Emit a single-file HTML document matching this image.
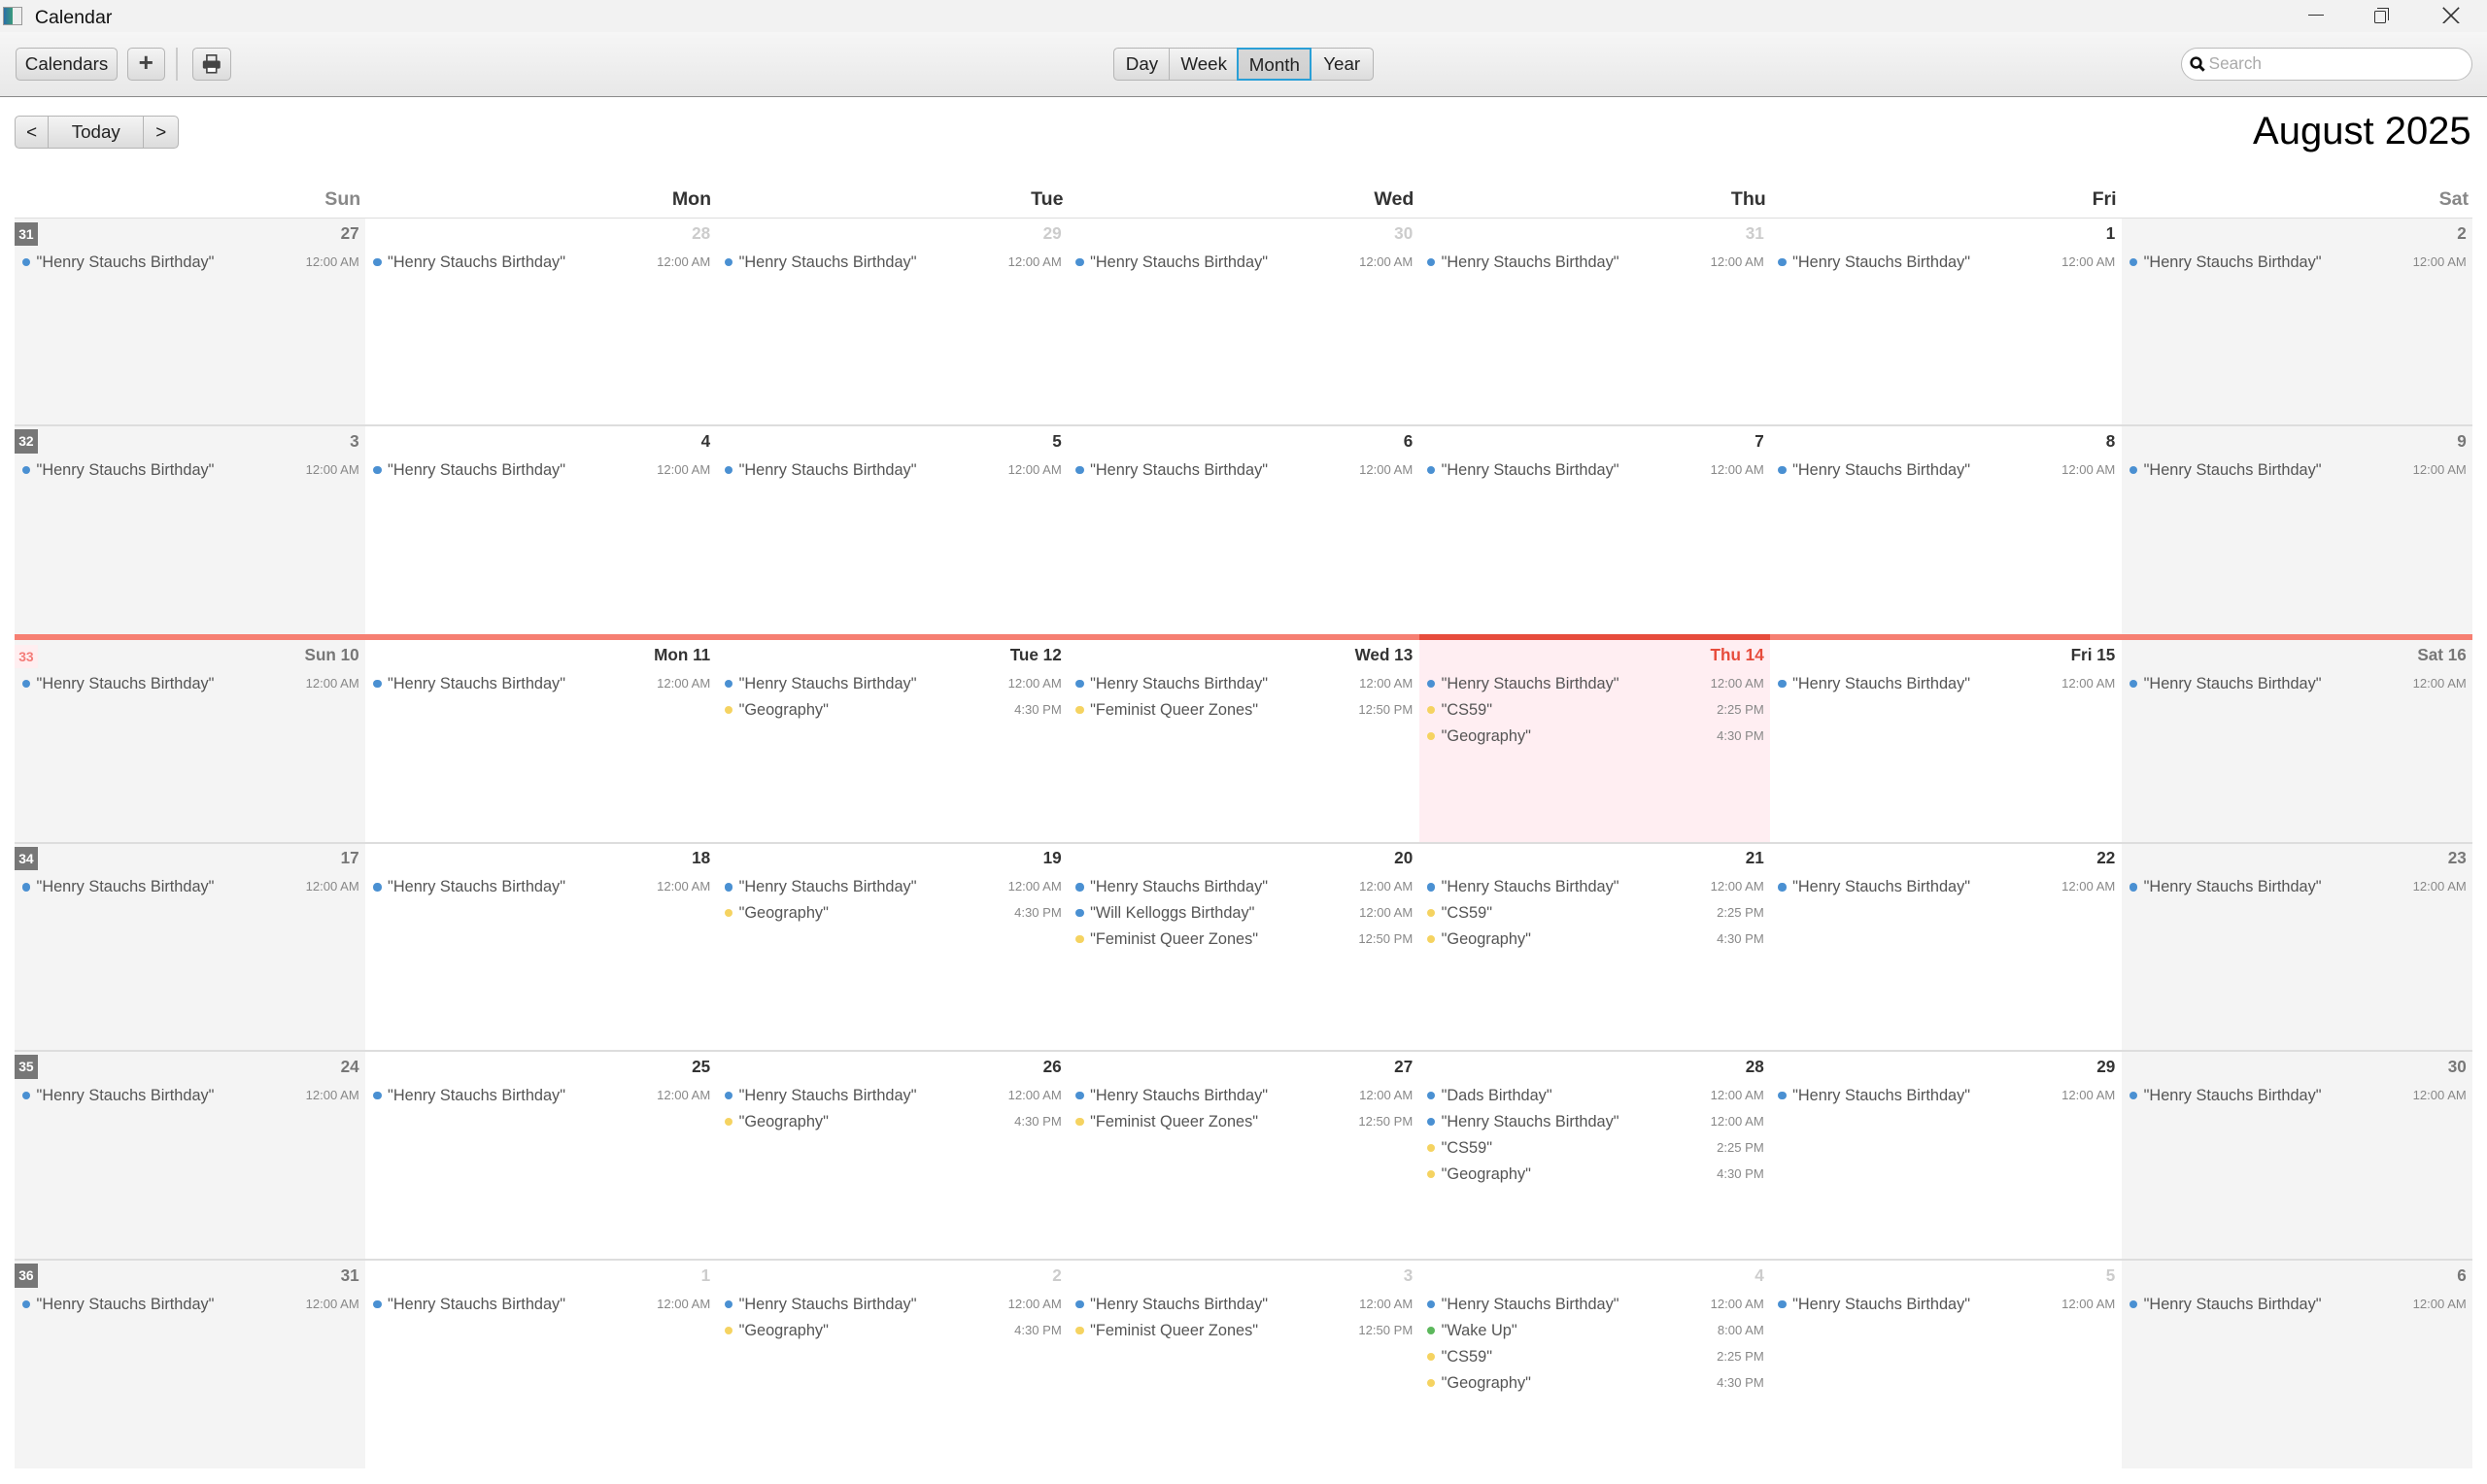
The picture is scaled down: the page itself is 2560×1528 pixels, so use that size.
<!DOCTYPE html>
<html><head><meta charset="utf-8"><style>
*{box-sizing:border-box;margin:0;padding:0}
html,body{width:2560px;height:1528px;overflow:hidden;background:#fff}
#w{zoom:1.632653;width:1568px;height:936px;position:relative;font-family:"Liberation Sans",Arial,sans-serif;background:#fff}
.tb{position:absolute;left:0;top:0;width:1568px;height:20px;background:#f2f2f2}
.tb .t{position:absolute;left:22px;top:4px;font-size:12px;color:#111}
.tb .ic{position:absolute;left:2px;top:4px;width:12px;height:12px;border:1px solid #999;background:linear-gradient(90deg,#2a6fa8 0,#3a9a7a 50%,#eee 50%)}
.tl{position:absolute;left:0;top:20px;width:1568px;height:41px;background:linear-gradient(#f6f6f6,#e8e8e8);border-bottom:1px solid #8a8a8a}
.btn{position:absolute;top:10px;height:21px;border:1px solid #b5b5b5;border-radius:3px;background:linear-gradient(#f4f4f4,#dcdcdc);font-size:11.5px;color:#222;text-align:center;line-height:20px}
.seg{position:absolute;top:10px;height:21px;border:1px solid #b5b5b5;background:linear-gradient(#f4f4f4,#dcdcdc);font-size:11.5px;color:#222;text-align:center;line-height:20px}
.srch{position:absolute;left:1375px;top:10px;width:184px;height:21px;border:1px solid #bbb;border-radius:11px;background:#fff;font-size:10.5px;color:#aaa;line-height:19px;padding-left:17px}
.title{position:absolute;right:10px;top:69px;font-size:24.5px;color:#000}
.hd{position:absolute;top:119px;font-size:12px;font-weight:bold;text-align:right;width:221.4px}
.hline{position:absolute;left:9px;top:137px;width:1550px;height:1.5px;background:#ddd}
.grid{position:absolute;left:9px;top:138px;width:1550px}
.r{display:flex;position:relative;border-bottom:1.5px solid #ddd}
.c{flex:1;position:relative;height:100%;background:#fff}
.we{background:#f4f4f4}
.d{position:absolute;right:4px;top:3px;font-size:10.5px;font-weight:bold;color:#333}
.we .d{color:#777}
.g .d,.we.g .d{color:#ccc}
.wk{position:absolute;left:0;top:2px;width:15px;height:15px;background:#777;color:#fff;font-size:8.5px;font-weight:bold;text-align:center;line-height:15px}
.ev{position:absolute;left:0;right:0;top:19.5px}
.e{height:16.5px;line-height:16px;padding-left:14px;position:relative;font-size:10px;color:#555;white-space:nowrap}
.e i{position:absolute;left:5px;top:5.5px;width:5px;height:5px;border-radius:50%;background:#4a90d2}
.e i.y{background:#f5d361}.e i.gr{background:#5cb85c}
.e s{position:absolute;right:4px;top:0;font-size:8px;color:#888;text-decoration:none}
.r3 .c{border-top:4px solid #f67f72}
.today{background:#ffeef2!important;border-top-color:#e74c3c!important}
</style></head><body><div id="w">
<div class="tb"><div class="ic"></div><div class="t">Calendar</div>
<div style="position:absolute;left:1455px;top:9px;width:10px;height:1px;background:#333"></div>
<div style="position:absolute;left:1497px;top:7px;width:7px;height:8px;border:1px solid #333;border-radius:1px"></div>
<div style="position:absolute;left:1499px;top:5px;width:7px;height:8px;border-top:1px solid #333;border-right:1px solid #333"></div>
<svg style="position:absolute;left:1540px;top:4px" width="11" height="11"><path d="M0.5 0.5L10.5 10.5M10.5 0.5L0.5 10.5" stroke="#333" stroke-width="1"/></svg></div>
<div class="tl">
<div class="btn" style="left:10px;width:64px">Calendars</div>
<div class="btn" style="left:80px;width:24px;font-weight:bold;font-size:16px;line-height:18px;color:#444">+</div>
<div style="position:absolute;left:111px;top:10px;width:1px;height:21px;background:#ccc"></div>
<div class="btn" style="left:121px;width:25px"><svg width="12" height="12" viewBox="0 0 12 12" style="margin-top:4px"><rect x="3" y="0.5" width="6" height="4" fill="none" stroke="#444"/><rect x="0.5" y="4" width="11" height="5" rx="1" fill="#444"/><rect x="3" y="8" width="6" height="3.5" fill="#fff" stroke="#444"/></svg></div>
<div class="seg" style="left:702px;width:36px;border-radius:3px 0 0 3px">Day</div>
<div class="seg" style="left:737px;width:44px">Week</div>
<div class="seg" style="left:780px;width:47px;border:1.5px solid #2a9fd6;background:linear-gradient(#d8d8d8,#cfcfcf);z-index:2">Month</div>
<div class="seg" style="left:826px;width:40px;border-radius:0 3px 3px 0">Year</div>
<div class="srch"><svg width="10" height="10" viewBox="0 0 10 10" style="position:absolute;left:5px;top:5px"><circle cx="4" cy="4" r="3" fill="none" stroke="#111" stroke-width="1.6"/><line x1="6" y1="6" x2="9" y2="9" stroke="#111" stroke-width="1.8"/></svg>Search</div>
</div>
<div class="btn" style="left:9px;top:73px;width:22px;border-radius:3px 0 0 3px">&lt;</div>
<div class="btn" style="left:30px;top:73px;width:61px;border-radius:0">Today</div>
<div class="btn" style="left:90px;top:73px;width:23px;border-radius:0 3px 3px 0">&gt;</div>
<div class="title">August 2025</div>
<div class="hd" style="left:6px;color:#888">Sun</div>
<div class="hd" style="left:227px;color:#333">Mon</div>
<div class="hd" style="left:449px;color:#333">Tue</div>
<div class="hd" style="left:670px;color:#333">Wed</div>
<div class="hd" style="left:892px;color:#333">Thu</div>
<div class="hd" style="left:1113px;color:#333">Fri</div>
<div class="hd" style="left:1335px;color:#888">Sat</div>
<div class="hline"></div>
<div class="grid">
<div class="r" style="height:131px">
<div class="c we"><span class="wk">31</span><div class="d">27</div><div class="ev"><div class="e"><i></i>"Henry Stauchs Birthday"<s>12:00 AM</s></div></div></div>
<div class="c g"><div class="d">28</div><div class="ev"><div class="e"><i></i>"Henry Stauchs Birthday"<s>12:00 AM</s></div></div></div>
<div class="c g"><div class="d">29</div><div class="ev"><div class="e"><i></i>"Henry Stauchs Birthday"<s>12:00 AM</s></div></div></div>
<div class="c g"><div class="d">30</div><div class="ev"><div class="e"><i></i>"Henry Stauchs Birthday"<s>12:00 AM</s></div></div></div>
<div class="c g"><div class="d">31</div><div class="ev"><div class="e"><i></i>"Henry Stauchs Birthday"<s>12:00 AM</s></div></div></div>
<div class="c"><div class="d">1</div><div class="ev"><div class="e"><i></i>"Henry Stauchs Birthday"<s>12:00 AM</s></div></div></div>
<div class="c we"><div class="d">2</div><div class="ev"><div class="e"><i></i>"Henry Stauchs Birthday"<s>12:00 AM</s></div></div></div>
</div>
<div class="r" style="height:131px;border-bottom:none">
<div class="c we"><span class="wk">32</span><div class="d">3</div><div class="ev"><div class="e"><i></i>"Henry Stauchs Birthday"<s>12:00 AM</s></div></div></div>
<div class="c"><div class="d">4</div><div class="ev"><div class="e"><i></i>"Henry Stauchs Birthday"<s>12:00 AM</s></div></div></div>
<div class="c"><div class="d">5</div><div class="ev"><div class="e"><i></i>"Henry Stauchs Birthday"<s>12:00 AM</s></div></div></div>
<div class="c"><div class="d">6</div><div class="ev"><div class="e"><i></i>"Henry Stauchs Birthday"<s>12:00 AM</s></div></div></div>
<div class="c"><div class="d">7</div><div class="ev"><div class="e"><i></i>"Henry Stauchs Birthday"<s>12:00 AM</s></div></div></div>
<div class="c"><div class="d">8</div><div class="ev"><div class="e"><i></i>"Henry Stauchs Birthday"<s>12:00 AM</s></div></div></div>
<div class="c we"><div class="d">9</div><div class="ev"><div class="e"><i></i>"Henry Stauchs Birthday"<s>12:00 AM</s></div></div></div>
</div>
<div class="r r3" style="height:132px">
<div class="c we"><span class="wk" style="background:#ffeef0;color:#f47c78;top:3px">33</span><div class="d">Sun 10</div><div class="ev"><div class="e"><i></i>"Henry Stauchs Birthday"<s>12:00 AM</s></div></div></div>
<div class="c"><div class="d">Mon 11</div><div class="ev"><div class="e"><i></i>"Henry Stauchs Birthday"<s>12:00 AM</s></div></div></div>
<div class="c"><div class="d">Tue 12</div><div class="ev"><div class="e"><i></i>"Henry Stauchs Birthday"<s>12:00 AM</s></div><div class="e"><i class="y"></i>"Geography"<s>4:30 PM</s></div></div></div>
<div class="c"><div class="d">Wed 13</div><div class="ev"><div class="e"><i></i>"Henry Stauchs Birthday"<s>12:00 AM</s></div><div class="e"><i class="y"></i>"Feminist Queer Zones"<s>12:50 PM</s></div></div></div>
<div class="c today"><div class="d" style="color:#e74c3c">Thu 14</div><div class="ev"><div class="e"><i></i>"Henry Stauchs Birthday"<s>12:00 AM</s></div><div class="e"><i class="y"></i>"CS59"<s>2:25 PM</s></div><div class="e"><i class="y"></i>"Geography"<s>4:30 PM</s></div></div></div>
<div class="c"><div class="d">Fri 15</div><div class="ev"><div class="e"><i></i>"Henry Stauchs Birthday"<s>12:00 AM</s></div></div></div>
<div class="c we"><div class="d">Sat 16</div><div class="ev"><div class="e"><i></i>"Henry Stauchs Birthday"<s>12:00 AM</s></div></div></div>
</div>
<div class="r" style="height:131.5px">
<div class="c we"><span class="wk">34</span><div class="d">17</div><div class="ev"><div class="e"><i></i>"Henry Stauchs Birthday"<s>12:00 AM</s></div></div></div>
<div class="c"><div class="d">18</div><div class="ev"><div class="e"><i></i>"Henry Stauchs Birthday"<s>12:00 AM</s></div></div></div>
<div class="c"><div class="d">19</div><div class="ev"><div class="e"><i></i>"Henry Stauchs Birthday"<s>12:00 AM</s></div><div class="e"><i class="y"></i>"Geography"<s>4:30 PM</s></div></div></div>
<div class="c"><div class="d">20</div><div class="ev"><div class="e"><i></i>"Henry Stauchs Birthday"<s>12:00 AM</s></div><div class="e"><i></i>"Will Kelloggs Birthday"<s>12:00 AM</s></div><div class="e"><i class="y"></i>"Feminist Queer Zones"<s>12:50 PM</s></div></div></div>
<div class="c"><div class="d">21</div><div class="ev"><div class="e"><i></i>"Henry Stauchs Birthday"<s>12:00 AM</s></div><div class="e"><i class="y"></i>"CS59"<s>2:25 PM</s></div><div class="e"><i class="y"></i>"Geography"<s>4:30 PM</s></div></div></div>
<div class="c"><div class="d">22</div><div class="ev"><div class="e"><i></i>"Henry Stauchs Birthday"<s>12:00 AM</s></div></div></div>
<div class="c we"><div class="d">23</div><div class="ev"><div class="e"><i></i>"Henry Stauchs Birthday"<s>12:00 AM</s></div></div></div>
</div>
<div class="r" style="height:131.5px">
<div class="c we"><span class="wk">35</span><div class="d">24</div><div class="ev"><div class="e"><i></i>"Henry Stauchs Birthday"<s>12:00 AM</s></div></div></div>
<div class="c"><div class="d">25</div><div class="ev"><div class="e"><i></i>"Henry Stauchs Birthday"<s>12:00 AM</s></div></div></div>
<div class="c"><div class="d">26</div><div class="ev"><div class="e"><i></i>"Henry Stauchs Birthday"<s>12:00 AM</s></div><div class="e"><i class="y"></i>"Geography"<s>4:30 PM</s></div></div></div>
<div class="c"><div class="d">27</div><div class="ev"><div class="e"><i></i>"Henry Stauchs Birthday"<s>12:00 AM</s></div><div class="e"><i class="y"></i>"Feminist Queer Zones"<s>12:50 PM</s></div></div></div>
<div class="c"><div class="d">28</div><div class="ev"><div class="e"><i></i>"Dads Birthday"<s>12:00 AM</s></div><div class="e"><i></i>"Henry Stauchs Birthday"<s>12:00 AM</s></div><div class="e"><i class="y"></i>"CS59"<s>2:25 PM</s></div><div class="e"><i class="y"></i>"Geography"<s>4:30 PM</s></div></div></div>
<div class="c"><div class="d">29</div><div class="ev"><div class="e"><i></i>"Henry Stauchs Birthday"<s>12:00 AM</s></div></div></div>
<div class="c we"><div class="d">30</div><div class="ev"><div class="e"><i></i>"Henry Stauchs Birthday"<s>12:00 AM</s></div></div></div>
</div>
<div class="r" style="height:131px;border-bottom:none">
<div class="c we"><span class="wk">36</span><div class="d">31</div><div class="ev"><div class="e"><i></i>"Henry Stauchs Birthday"<s>12:00 AM</s></div></div></div>
<div class="c g"><div class="d">1</div><div class="ev"><div class="e"><i></i>"Henry Stauchs Birthday"<s>12:00 AM</s></div></div></div>
<div class="c g"><div class="d">2</div><div class="ev"><div class="e"><i></i>"Henry Stauchs Birthday"<s>12:00 AM</s></div><div class="e"><i class="y"></i>"Geography"<s>4:30 PM</s></div></div></div>
<div class="c g"><div class="d">3</div><div class="ev"><div class="e"><i></i>"Henry Stauchs Birthday"<s>12:00 AM</s></div><div class="e"><i class="y"></i>"Feminist Queer Zones"<s>12:50 PM</s></div></div></div>
<div class="c g"><div class="d">4</div><div class="ev"><div class="e"><i></i>"Henry Stauchs Birthday"<s>12:00 AM</s></div><div class="e"><i class="gr"></i>"Wake Up"<s>8:00 AM</s></div><div class="e"><i class="y"></i>"CS59"<s>2:25 PM</s></div><div class="e"><i class="y"></i>"Geography"<s>4:30 PM</s></div></div></div>
<div class="c g"><div class="d">5</div><div class="ev"><div class="e"><i></i>"Henry Stauchs Birthday"<s>12:00 AM</s></div></div></div>
<div class="c we"><div class="d">6</div><div class="ev"><div class="e"><i></i>"Henry Stauchs Birthday"<s>12:00 AM</s></div></div></div>
</div>
</div>
</div></body></html>
